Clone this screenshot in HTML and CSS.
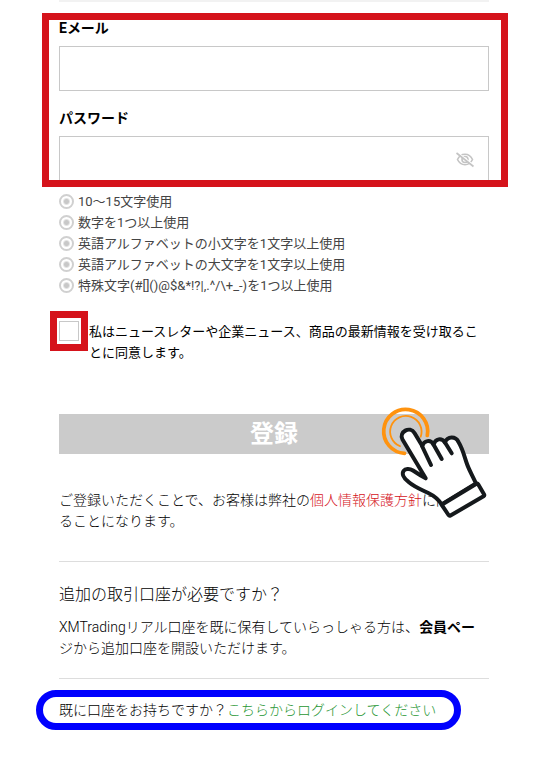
FILE: index.html
```html
<!DOCTYPE html>
<html lang="ja">
  <head>
    <meta charset="utf-8">
    <title>口座登録</title>
    <link rel="stylesheet" href="styles.css">
  </head>
  <body>
    <main class="page">
      <form class="register">
        <div class="credentials">
          <div class="field">
            <label for="email">Eメール</label>
            <input type="email" id="email">
          </div>
          <div class="field">
            <label for="password">パスワード</label>
            <div class="password-box">
              <input type="password" id="password">
              <button type="button" class="toggle" aria-label="パスワードを表示">
                <svg width="18" height="16" viewBox="0 0 18 16" fill="none" stroke="#c4c4c4">
                  <path d="M1.5 7.5C3 4.3 5.800 2.300 9 2.300s6 2 7.500 5.200c-1.500 3.200-4.300 5.200-7.500 5.200S3 10.700 1.500 7.500z" stroke-width="1.600" />
                  <circle cx="9" cy="7.500" r="3" stroke-width="1.600" />
                  <path d="M1.500 0.500L18 13.500" stroke="#fff" stroke-width="1.500" />
                  <path d="M0.500 1L17.500 14.500" stroke-width="1.700" />
                </svg>
              </button>
            </div>
          </div>
        </div>
        <ul class="rules">
          <li>10～15文字使用</li>
          <li>数字を1つ以上使用</li>
          <li>英語アルファベットの小文字を1文字以上使用</li>
          <li>英語アルファベットの大文字を1文字以上使用</li>
          <li>特殊文字(#[]()@$&amp;*!?|,.^/\+_-)を1つ以上使用</li>
        </ul>
        <div class="newsletter">
          <span class="tick"><input type="checkbox" id="newsletter"></span>
          <label for="newsletter">私はニュースレターや企業ニュース、商品の最新情報を受け取ることに同意します。</label>
        </div>
        <div class="submit">
          <button type="submit" class="submit-button">登録</button>
          <svg class="pointer" width="110" height="115" viewBox="0 0 110 115" fill="none" stroke-linecap="round" stroke-linejoin="round">
            <g stroke="#ff930f">
              <path d="M24.500 48.300A22 22 0 1 1 47.300 30.500" stroke-width="3.700" />
              <path d="M20 41.200A15.700 15.700 0 1 1 40.700 31.700" stroke-width="1.800" />
            </g>
            <g stroke="#15191c" stroke-width="4" fill="#fff">
              <path d="M45.700 73.300L22.500 34.500C18.500 27 30 20.500 34.500 28L42.300 41C44 35.500 50.500 34 53.500 39.500C55.500 33.500 61.500 32.500 65 37.500C67.500 31 75.500 31 78.500 37C83 44.500 84.500 52 87 59C89.500 66 93 71.500 96 78.500L61.700 99.500C58 93.500 53.500 90.500 48.300 88C41 84.500 34.500 82 28.300 76.700C17 68 25.500 60.500 33 65.500C37.500 68.500 41.500 71 45.700 73.300z" />
              <path d="M42 41L51 60M53.500 39.500L61.700 54M65 37.500L71.700 48.300" />
              <path d="M61.700 99.800L96 79Q97.500 78.200 98.300 79.600L104 89.300Q104.700 90.500 103.500 91.300L70.500 110.500Q69.300 111.200 68.500 110z" />
            </g>
          </svg>
        </div>
        <p class="terms">ご登録いただくことで、お客様は弊社の<a href="#" class="policy">個人情報保護方針</a>に同意することになります。</p>
      </form>
      <section class="additional">
        <h2>追加の取引口座が必要ですか？</h2>
        <p>XMTradingリアル口座を既に保有していらっしゃる方は、<b>会員ペー</b>ジから追加口座を開設いただけます。</p>
      </section>
      <div class="login">既に口座をお持ちですか？<a href="#">こちらからログインしてください</a></div>
    </main>
  </body>
</html>
```
FILE: styles.css
```css
*,
*::before {
  box-sizing: border-box;
}
body {
  margin: 0;
  background-color: #fff;
  color: #000;
  font-family: Roboto, "Noto Sans CJK JP", sans-serif;
  font-size: 14px;
  font-weight: 300;
  line-height: 21px;
}
.page {
  padding: 0 46px 40px 59px;
}
a {
  text-decoration: none;
}
p {
  margin: 0;
}
.register {
  border-top: 2px solid #f2f2f2;
  padding-top: 11px;
}
/* Email and password */
.credentials {
  margin: 0 -19px 0 -17px;
  padding: 0 12px 0 10px;
  border: 7px solid #d5131b;
}
.field label {
  display: block;
  padding-bottom: 10px;
  font-weight: bold;
  line-height: 16px;
}
.field + .field {
  padding-top: 19px;
}
.field input {
  display: block;
  width: 100%;
  height: 45px;
  padding: 0 12px;
  border: 1px solid #c8c8c8;
  border-radius: 0;
  background-color: #fff;
  font: inherit;
  outline: none;
}
.password-box {
  position: relative;
}
.password-box input {
  height: 44px;
  padding-right: 44px;
  border-bottom: none;
}
.toggle {
  position: absolute;
  top: 16px;
  right: 15px;
  padding: 0;
  border: none;
  background: none;
  line-height: 0;
  cursor: pointer;
}
/* Password rules */
.rules {
  margin: 0;
  padding: 4px 0 0;
  list-style: none;
  color: #444;
  font-size: 13px;
  font-weight: 400;
}
.rules li {
  display: flex;
  align-items: center;
  gap: 4px;
}
.rules li::before {
  content: "";
  width: 15px;
  height: 15px;
  border: 2px solid #d0d0d0;
  border-radius: 50%;
  background: radial-gradient(circle, #c8c8c8 0 2px, #fff 4px);
}
/* Newsletter tick box */
.newsletter {
  display: flex;
  align-items: flex-start;
  margin-left: -9px;
  padding-top: 15px;
  font-size: 13px;
  font-weight: 400;
}
.tick {
  flex: none;
  padding: 3px 2px;
  border: 7px solid #d5131b;
}
.tick input {
  display: block;
  width: 20px;
  height: 20px;
  margin: 0;
  border: 1px solid #c8c8c8;
  background-color: #fff;
  appearance: none;
}
.newsletter label {
  padding: 10px 0 0 1px;
}
/* Submit button */
.submit {
  position: relative;
  padding-top: 51px;
}
.submit-button {
  display: block;
  width: 100%;
  height: 40px;
  padding: 0 0 6px;
  border: none;
  background-color: #cbcbcb;
  color: #fff;
  font: bold 24px Roboto, "Noto Sans CJK JP", sans-serif;
  cursor: pointer;
}
.pointer {
  position: absolute;
  top: 42px;
  right: -1px;
  pointer-events: none;
}
.terms {
  padding: 36px 0 29px;
}
.policy {
  color: #d5131b;
}
/* Additional account */
.additional {
  padding: 22px 0 19px;
  border-top: 1px solid #ddd;
  border-bottom: 1px solid #ddd;
}
.additional h2 {
  margin: 0 0 12px;
  font-size: 16px;
  font-weight: 300;
  line-height: 21px;
}
.additional b {
  font-weight: bold;
}
/* Login link */
.login {
  width: fit-content;
  margin: 11px 0 0 -23px;
  padding: 3px 18px 2px 16px;
  border: 7px solid #0000fe;
  border-radius: 20px;
}
.login a {
  color: #1f9632;
}
```
